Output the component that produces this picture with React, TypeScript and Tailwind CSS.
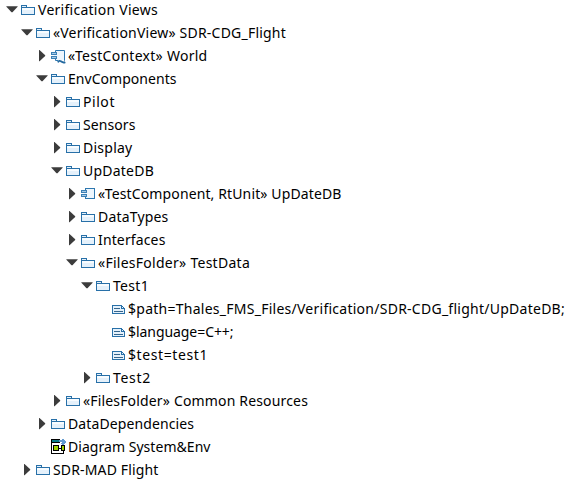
import { useLayoutEffect, useRef } from "react";

type Icon = "folder" | "component" | "context" | "slot" | "diagram";
type Item = { level: number; open?: boolean; icon: Icon; text: string; width: number };

const items: Item[] = [
  { level: 0, open: true, icon: "folder", text: "Verification Views", width: 120 },
  { level: 1, open: true, icon: "folder", text: "«VerificationView» SDR-CDG_Flight", width: 233 },
  { level: 2, open: false, icon: "context", text: "«TestContext» World", width: 139.5 },
  { level: 2, open: true, icon: "folder", text: "EnvComponents", width: 108.5 },
  { level: 3, open: false, icon: "folder", text: "Pilot", width: 32 },
  { level: 3, open: false, icon: "folder", text: "Sensors", width: 52.5 },
  { level: 3, open: false, icon: "folder", text: "Display", width: 49.5 },
  { level: 3, open: true, icon: "folder", text: "UpDateDB", width: 71 },
  { level: 4, open: false, icon: "component", text: "«TestComponent, RtUnit» UpDateDB", width: 243.5 },
  { level: 4, open: false, icon: "folder", text: "DataTypes", width: 70.5 },
  { level: 4, open: false, icon: "folder", text: "Interfaces", width: 67.5 },
  { level: 4, open: true, icon: "folder", text: "«FilesFolder» TestData", width: 152 },
  { level: 5, open: true, icon: "folder", text: "Test1", width: 36 },
  { level: 6, icon: "slot", text: "$path=Thales_FMS_Files/Verification/SDR-CDG_flight/UpDateDB;", width: 437 },
  { level: 6, icon: "slot", text: "$language=C++;", width: 105.5 },
  { level: 6, icon: "slot", text: "$test=test1", width: 80 },
  { level: 5, open: false, icon: "folder", text: "Test2", width: 38 },
  { level: 3, open: false, icon: "folder", text: "«FilesFolder» Common Resources", width: 225 },
  { level: 2, open: false, icon: "folder", text: "DataDependencies", width: 126 },
  { level: 2, icon: "diagram", text: "Diagram System&Env", width: 142.5 },
  { level: 1, open: false, icon: "folder", text: "SDR-MAD Flight", width: 105.5 },
];

const indents = ["pl-[4px]", "pl-[19px]", "pl-[34px]", "pl-[49px]", "pl-[64px]", "pl-[79px]", "pl-[94px]"];

function Arrow({ open }: { open?: boolean }) {
  return (
    <svg className="mt-1 h-4 w-4 shrink-0" viewBox="0 0 16 16" fill="#3c3c3c">
      {open === true && <path d="M2.4 4.2h11.2v.6L8.5 10.2h-1L2.4 4.8z" />}
      {open === false && <path d="M5 2h.5l5.7 5.3v.6l-5.7 5.3H5z" />}
    </svg>
  );
}

function ComponentShape() {
  return (
    <>
      <path d="M5.5 2.5h9v10h-9z" fill="#edf6fd" stroke="#2d77af" />
      <path d="M4 4h3v7H4z" fill="#edf6fd" />
      <path d="M1 4h6v3H1zM1 8h6v3H1z" fill="#3b80b5" />
      <path d="M2 5h4v1H2zM2 9h4v1H2z" fill="#a5cae6" />
    </>
  );
}

function ItemIcon({ kind }: { kind: Icon }) {
  return (
    <svg className="mt-1 h-4 w-4 shrink-0" viewBox="0 0 16 16" fill="none" shapeRendering={kind === "context" ? "auto" : "crispEdges"}>
      {kind === "folder" && (
        <>
          <path d="M1.5 12.5v-9h5v2h8v7z" fill="#e5f1fb" stroke="#2870a8" />
          <path d="M2 6h12v2H2z" fill="#f8fcff" />
          <path d="M2 5h5v1H2z" fill="#2870a8" />
        </>
      )}
      {kind === "component" && <ComponentShape />}
      {kind === "context" && (
        <>
          <ComponentShape />
          <path d="M8 12h6v1H8z" fill="#fff" />
          <path d="M8 14.4c.6-1.7 1.8-1.9 2.9-1.1s2.2 2 4.4.8" stroke="#24699f" strokeWidth="1.9" />
        </>
      )}
      {kind === "slot" && (
        <>
          <path d="M2.5 4.5h9l3 3v5h-12z" fill="#e5f1fb" stroke="#2870a8" />
          <path d="M4 7h6v1H4zM4 10h9v1H4z" fill="#35658c" />
          <path d="M11 5h1v2h2v1h-3z" fill="#2870a8" />
        </>
      )}
      {kind === "diagram" && (
        <>
          <path d="M1 0h9v3H1z" fill="#087b87" />
          <path d="M1.5 0v14.5h12V12" stroke="#000" />
          <path d="M1 0h9v1H1zM1 3h9v1H1z" fill="#000" />
          <path d="M3.5 6.5h5v5h-5zM11.5 6.5h3v5h-3z" fill="#9fd000" stroke="#000" />
          <path d="M3 6h6v1H3zM9 9h3v1H9z" fill="#000" />
          <path d="M9 1h3V0h2v1h1v1h1v2h-1v1h-1v1h-2V5h-1V4h1V3H9z" fill="#639bd0" />
        </>
      )}
    </svg>
  );
}

function Label({ text, width }: { text: string; width: number }) {
  const ref = useRef<HTMLSpanElement>(null);
  useLayoutEffect(() => {
    const el = ref.current;
    if (!el) return;
    el.style.letterSpacing = "0px";
    const natural = el.getBoundingClientRect().width;
    el.style.letterSpacing = `${(width - natural) / text.length}px`;
  }, [text, width]);
  return (
    <span ref={ref} className="ml-[2px] whitespace-pre">
      {text}
    </span>
  );
}

export default function App() {
  return (
    <main className="h-[483px] w-[580px] overflow-hidden bg-white font-['Noto_Sans','Open_Sans',sans-serif] text-[14px] leading-[23px] text-black">
      <ul className="-mt-[2px]">
        {items.map((item) => (
          <li key={item.text} className={`flex h-[23px] items-start ${indents[item.level]}`}>
            <Arrow open={item.open} />
            <ItemIcon kind={item.icon} />
            <Label text={item.text} width={item.width} />
          </li>
        ))}
      </ul>
    </main>
  );
}
